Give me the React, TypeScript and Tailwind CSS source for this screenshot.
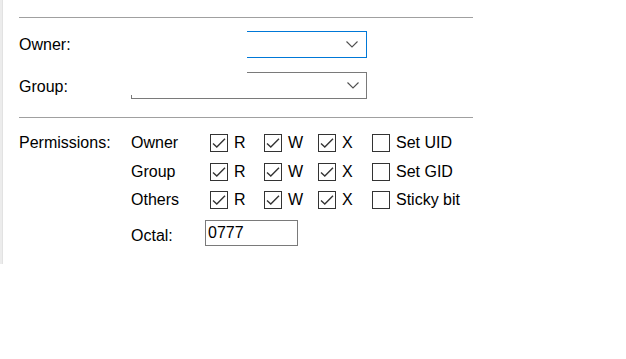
import React from "react";

const Chevron = () => (
  <svg width="12" height="7" viewBox="0 0 12 7" className="shrink-0">
    <path d="M0.5 0.5 L6 6 L11.5 0.5" fill="none" stroke="#505050" strokeWidth="1.1" />
  </svg>
);

const Check = ({ checked }: { checked: boolean }) => (
  <div className="w-[18px] h-[18px] border border-[#333333] bg-white flex items-center justify-center shrink-0">
    {checked && (
      <svg width="16" height="16" viewBox="0 0 16 16">
        <path d="M2 8.5 L5.8 12 L14 3.8" fill="none" stroke="#333333" strokeWidth="1.4" />
      </svg>
    )}
  </div>
);

const Perm = ({ label, checked }: { label: string; checked: boolean }) => (
  <div className="flex items-center w-[54px]">
    <Check checked={checked} />
    <span className="ml-[6px]">{label}</span>
  </div>
);

const rows = [
  { who: "Owner", special: "Set UID" },
  { who: "Group", special: "Set GID" },
  { who: "Others", special: "Sticky bit" },
];

export default function App() {
  return (
    <div
      className="w-[626px] h-[359px] bg-white flex text-black text-[16px] leading-none"
      style={{ fontFamily: '"Liberation Sans", Arial, sans-serif' }}
    >
      <div className="w-[3px] h-[264px] bg-[#ececec] border-r border-[#e2e2e2]" />
      <div className="pl-[16px] flex flex-col w-[474px]">
        <div className="h-[17px]" />
        <div className="h-px w-[454px] bg-[#a0a0a0]" />

        <div className="mt-[13px] flex items-center h-[27px]">
          <span className="w-[228px]">Owner:</span>
          <div className="w-[120px] h-[27px] border-t border-r border-b border-[#0078d7] flex items-center justify-end pr-[8px]">
            <Chevron />
          </div>
        </div>

        <div className="mt-[14px] flex items-center h-[27px]">
          <span className="w-[112px] mt-[3px]">Group:</span>
          <div className="relative w-[236px] h-[27px] border-r border-b border-[#7a7a7a] flex flex-col">
            <div className="flex">
              <div className="w-[116px]" />
              <div className="flex-1 border-t border-[#7a7a7a]" />
            </div>
            <div className="flex-1 flex items-center justify-end pr-[7px]">
              <Chevron />
            </div>
            <div className="absolute left-0 bottom-0 w-px h-[3px] bg-[#7a7a7a]" />
          </div>
        </div>

        <div className="mt-[18px] h-px w-[454px] bg-[#a0a0a0]" />

        <div className="mt-[16px] flex">
          <div className="w-[112px] h-[18px] flex items-center">Permissions:</div>
          <div className="flex flex-col">
            {rows.map((r, i) => (
              <div key={r.who} className={`flex items-center h-[18px] ${i > 0 ? "mt-[10.5px]" : ""}`}>
                <span className="w-[79px]">{r.who}</span>
                <Perm label="R" checked />
                <Perm label="W" checked />
                <Perm label="X" checked />
                <div className="flex items-center">
                  <Check checked={false} />
                  <span className="ml-[6px]">{r.special}</span>
                </div>
              </div>
            ))}
            <div className="mt-[11px] flex items-center">
              <span className="w-[74px] mt-[5px]">Octal:</span>
              <div className="w-[93px] h-[26px] border border-[#7a7a7a] flex items-center pl-[2px]">0777</div>
            </div>
          </div>
        </div>
      </div>
    </div>
  );
}
